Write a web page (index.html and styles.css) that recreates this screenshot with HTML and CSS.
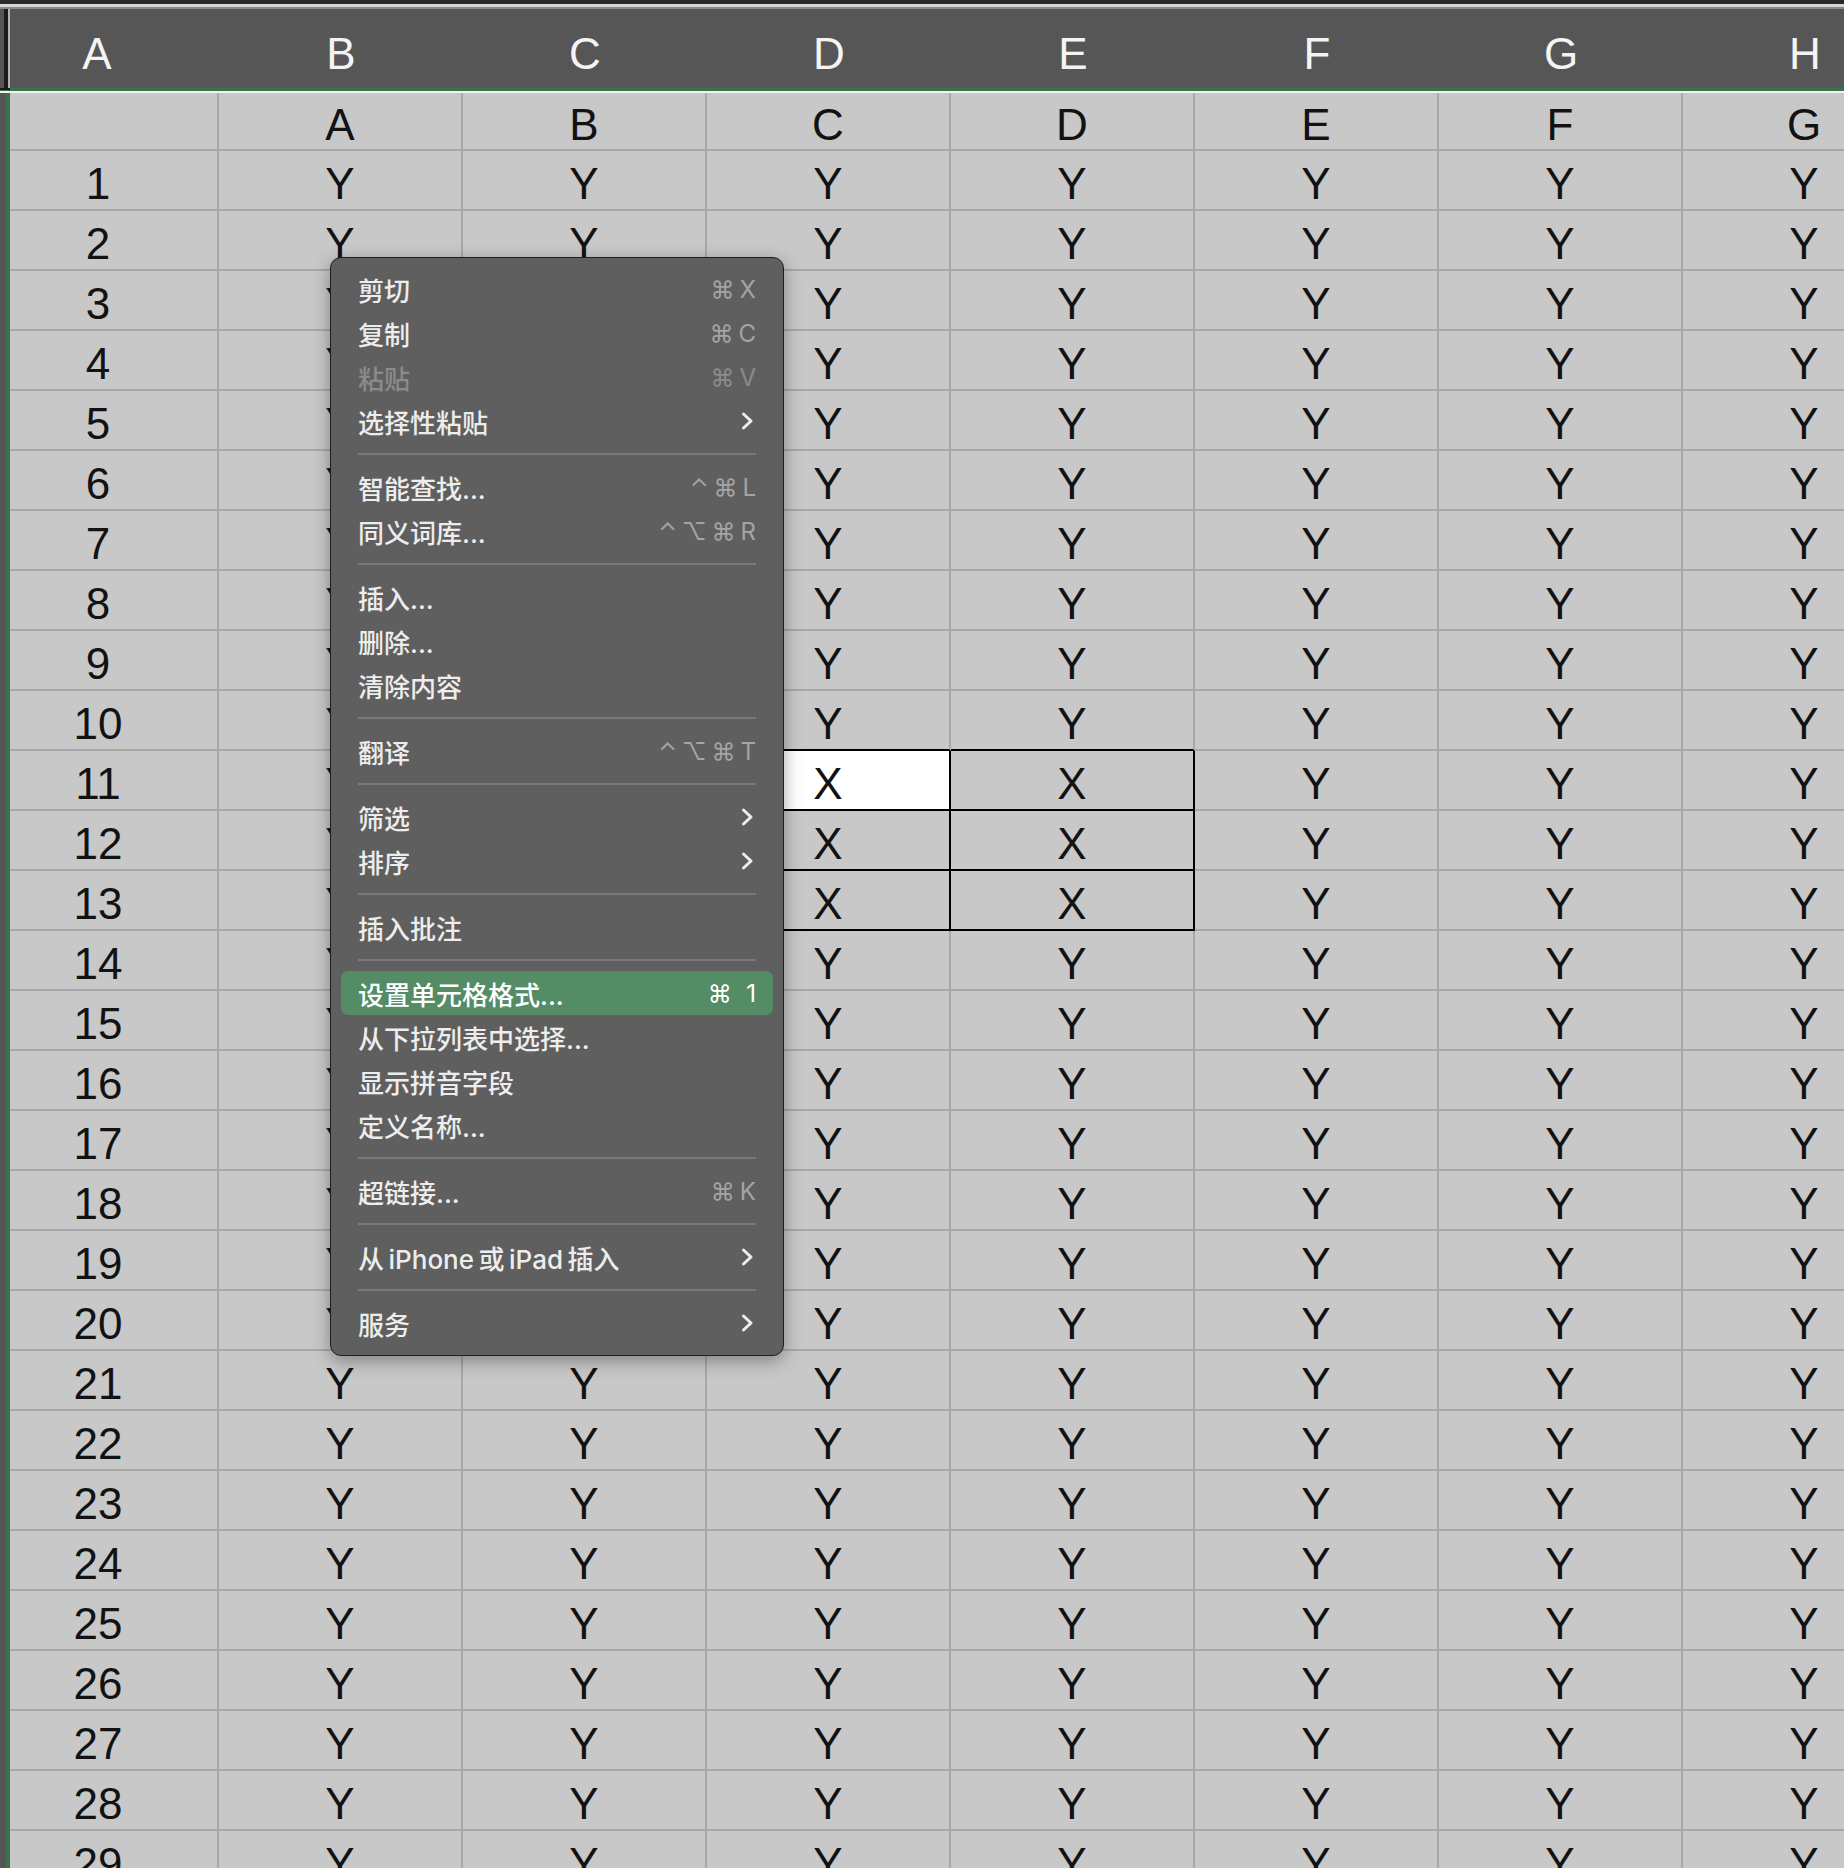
FILE: index.html
```html
<!DOCTYPE html>
<html lang="zh-CN">
<head>
    <meta charset="UTF-8" />
    <title>表格 - 右键菜单</title>
    <link rel="stylesheet" href="styles.css">
</head>
<body>

    <div class="topbar"></div>

    <div class="colhead">
        <div class="corner"></div>
        <div class="hcell first">A</div>
        <div class="hcell">B</div>
        <div class="hcell">C</div>
        <div class="hcell">D</div>
        <div class="hcell">E</div>
        <div class="hcell">F</div>
        <div class="hcell">G</div>
        <div class="hcell">H</div>
    </div>
    <div class="headline"></div>

    <div class="below">
        <div class="edge"></div>
        <div class="grid" id="grid"></div>
    </div>

    <div class="menu">
        <div class="item"><span class="label">剪切</span><span class="key">⌘X</span></div>
        <div class="item"><span class="label">复制</span><span class="key">⌘C</span></div>
        <div class="item disabled"><span class="label">粘贴</span><span class="key">⌘V</span></div>
        <div class="item"><span class="label">选择性粘贴</span><svg class="chev" width="13" height="20" viewBox="0 0 13 20"><polyline points="2.5,3 10,10 2.5,17" /></svg></div>
        <div class="sep"></div>
        <div class="item"><span class="label">智能查找...</span><span class="key">⌃⌘L</span></div>
        <div class="item"><span class="label">同义词库...</span><span class="key">⌃⌥⌘R</span></div>
        <div class="sep"></div>
        <div class="item"><span class="label">插入...</span></div>
        <div class="item"><span class="label">删除...</span></div>
        <div class="item"><span class="label">清除内容</span></div>
        <div class="sep"></div>
        <div class="item"><span class="label">翻译</span><span class="key">⌃⌥⌘T</span></div>
        <div class="sep"></div>
        <div class="item"><span class="label">筛选</span><svg class="chev" width="13" height="20" viewBox="0 0 13 20"><polyline points="2.5,3 10,10 2.5,17" /></svg></div>
        <div class="item"><span class="label">排序</span><svg class="chev" width="13" height="20" viewBox="0 0 13 20"><polyline points="2.5,3 10,10 2.5,17" /></svg></div>
        <div class="sep"></div>
        <div class="item"><span class="label">插入批注</span></div>
        <div class="sep"></div>
        <div class="item active"><span class="label">设置单元格格式...</span><span class="key">⌘&thinsp;1</span></div>
        <div class="item"><span class="label">从下拉列表中选择...</span></div>
        <div class="item"><span class="label">显示拼音字段</span></div>
        <div class="item"><span class="label">定义名称...</span></div>
        <div class="sep"></div>
        <div class="item"><span class="label">超链接...</span><span class="key">⌘K</span></div>
        <div class="sep"></div>
        <div class="item"><span class="label">从&thinsp;iPhone&thinsp;或&thinsp;iPad&thinsp;插入</span><svg class="chev" width="13" height="20" viewBox="0 0 13 20"><polyline points="2.5,3 10,10 2.5,17" /></svg></div>
        <div class="sep"></div>
        <div class="item"><span class="label">服务</span><svg class="chev" width="13" height="20" viewBox="0 0 13 20"><polyline points="2.5,3 10,10 2.5,17" /></svg></div>
    </div>

    <script>
    document.addEventListener("DOMContentLoaded", () => {
        const grid = document.getElementById('grid');
        const letters = ['A', 'B', 'C', 'D', 'E', 'F', 'G'];

        function addCell(text, classes) {
            const cell = document.createElement('div');
            cell.className = 'cell ' + classes.join(' ');
            cell.textContent = text;
            grid.appendChild(cell);
        }

        // row 0: the letters of the pasted sheet
        addCell('', ['first']);
        letters.forEach(l => addCell(l, []));

        for (let r = 1; r <= 29; r++) {
            addCell(String(r), ['first']);
            for (let c = 1; c <= 7; c++) {
                const classes = [];
                const inSel = r >= 11 && r <= 13 && (c === 3 || c === 4);
                if ((c === 3 || c === 4) && r >= 10 && r <= 13) classes.push('sel-bottom');
                if (r >= 11 && r <= 13 && c >= 2 && c <= 4) classes.push('sel-right');
                if (r === 11 && c === 3) classes.push('current');
                addCell(inSel ? 'X' : 'Y', classes);
            }
        }
    });
    </script>

</body>
</html>
```

FILE: styles.css
```css
body {
    margin: 0;
    width: 1844px;
    height: 1868px;
    overflow: hidden;
    background-color: #c8c8c8;
    font-family: "Liberation Sans Narrow", "Arial Narrow", "Liberation Sans", sans-serif;
    position: relative;
}

.topbar {
    height: 9px;
    background: linear-gradient(to bottom, #2a2a2a 0 4px, #d6d6d6 4px 7px, #8a8a8a 7px 9px);
}

.colhead {
    display: grid;
    grid-template-columns: 10px 209px repeat(7, 244px);
    height: 79px;
    background-color: #565656;
}

.corner {
    background: linear-gradient(to right, #555 0 4px, #1b1b1b 4px 8px, #b4b4b4 8px 10px);
    border-bottom: 2px solid #1b1b1b;
    margin-bottom: -2px;
}

.hcell {
    display: flex;
    align-items: center;
    justify-content: center;
    padding-top: 10px;
    color: #f4f4f4;
    font-size: 44px;
}

.hcell.first {
    padding-right: 35px;
}

.headline {
    height: 3px;
    background-color: #3b7249;
    border-bottom: 2px solid #f2f2f2;
}

.below {
    display: flex;
}

.edge {
    width: 6px;
    flex-shrink: 0;
    background-color: #555;
    border-right: 4px solid #3b7249;
}

.grid {
    display: grid;
    grid-template-columns: 209px repeat(7, 244px);
    grid-template-rows: 58px;
    grid-auto-rows: 60px;
}

.cell {
    box-sizing: border-box;
    display: flex;
    align-items: center;
    justify-content: center;
    padding-top: 7px;
    border-right: 2px solid #a8a8a8;
    border-bottom: 2px solid #a8a8a8;
    font-size: 44px;
    color: #121212;
}

.cell.first {
    padding-right: 31px;
}

.cell.sel-bottom {
    border-bottom-color: #000;
}

.cell.sel-right {
    border-right-color: #000;
}

.cell.current {
    background-color: #fff;
}

/* context menu */
.menu {
    position: absolute;
    left: 330px;
    top: 257px;
    width: 454px;
    box-sizing: border-box;
    padding: 9px 0 10px;
    background-color: #5f5f5f;
    border: 1px solid #1f1f1f;
    border-radius: 11px;
    box-shadow: 0 5px 18px rgba(0, 0, 0, 0.35);
    font-family: Inter, "Noto Sans CJK SC", sans-serif;
}

.item {
    display: flex;
    align-items: center;
    justify-content: space-between;
    height: 44px;
    margin: 0 10px;
    padding: 0 17px;
    border-radius: 7px;
}

.label {
    font-size: 26px;
    font-weight: 500;
    color: #ededed;
}

.key {
    font-size: 24px;
    letter-spacing: 5px;
    margin-right: -5px;
    color: #a4a4a4;
}

.item.disabled .label,
.item.disabled .key {
    color: #8b8b8b;
}

.item.active {
    background-color: #548c65;
}

.item.active .label,
.item.active .key {
    color: #fff;
}

.chev {
    margin-right: 2px;
}

.chev polyline {
    fill: none;
    stroke: #ededed;
    stroke-width: 3;
    stroke-linecap: round;
    stroke-linejoin: round;
}

.sep {
    height: 2px;
    margin: 10px 27px;
    background-color: #7a7a7a;
}
```
